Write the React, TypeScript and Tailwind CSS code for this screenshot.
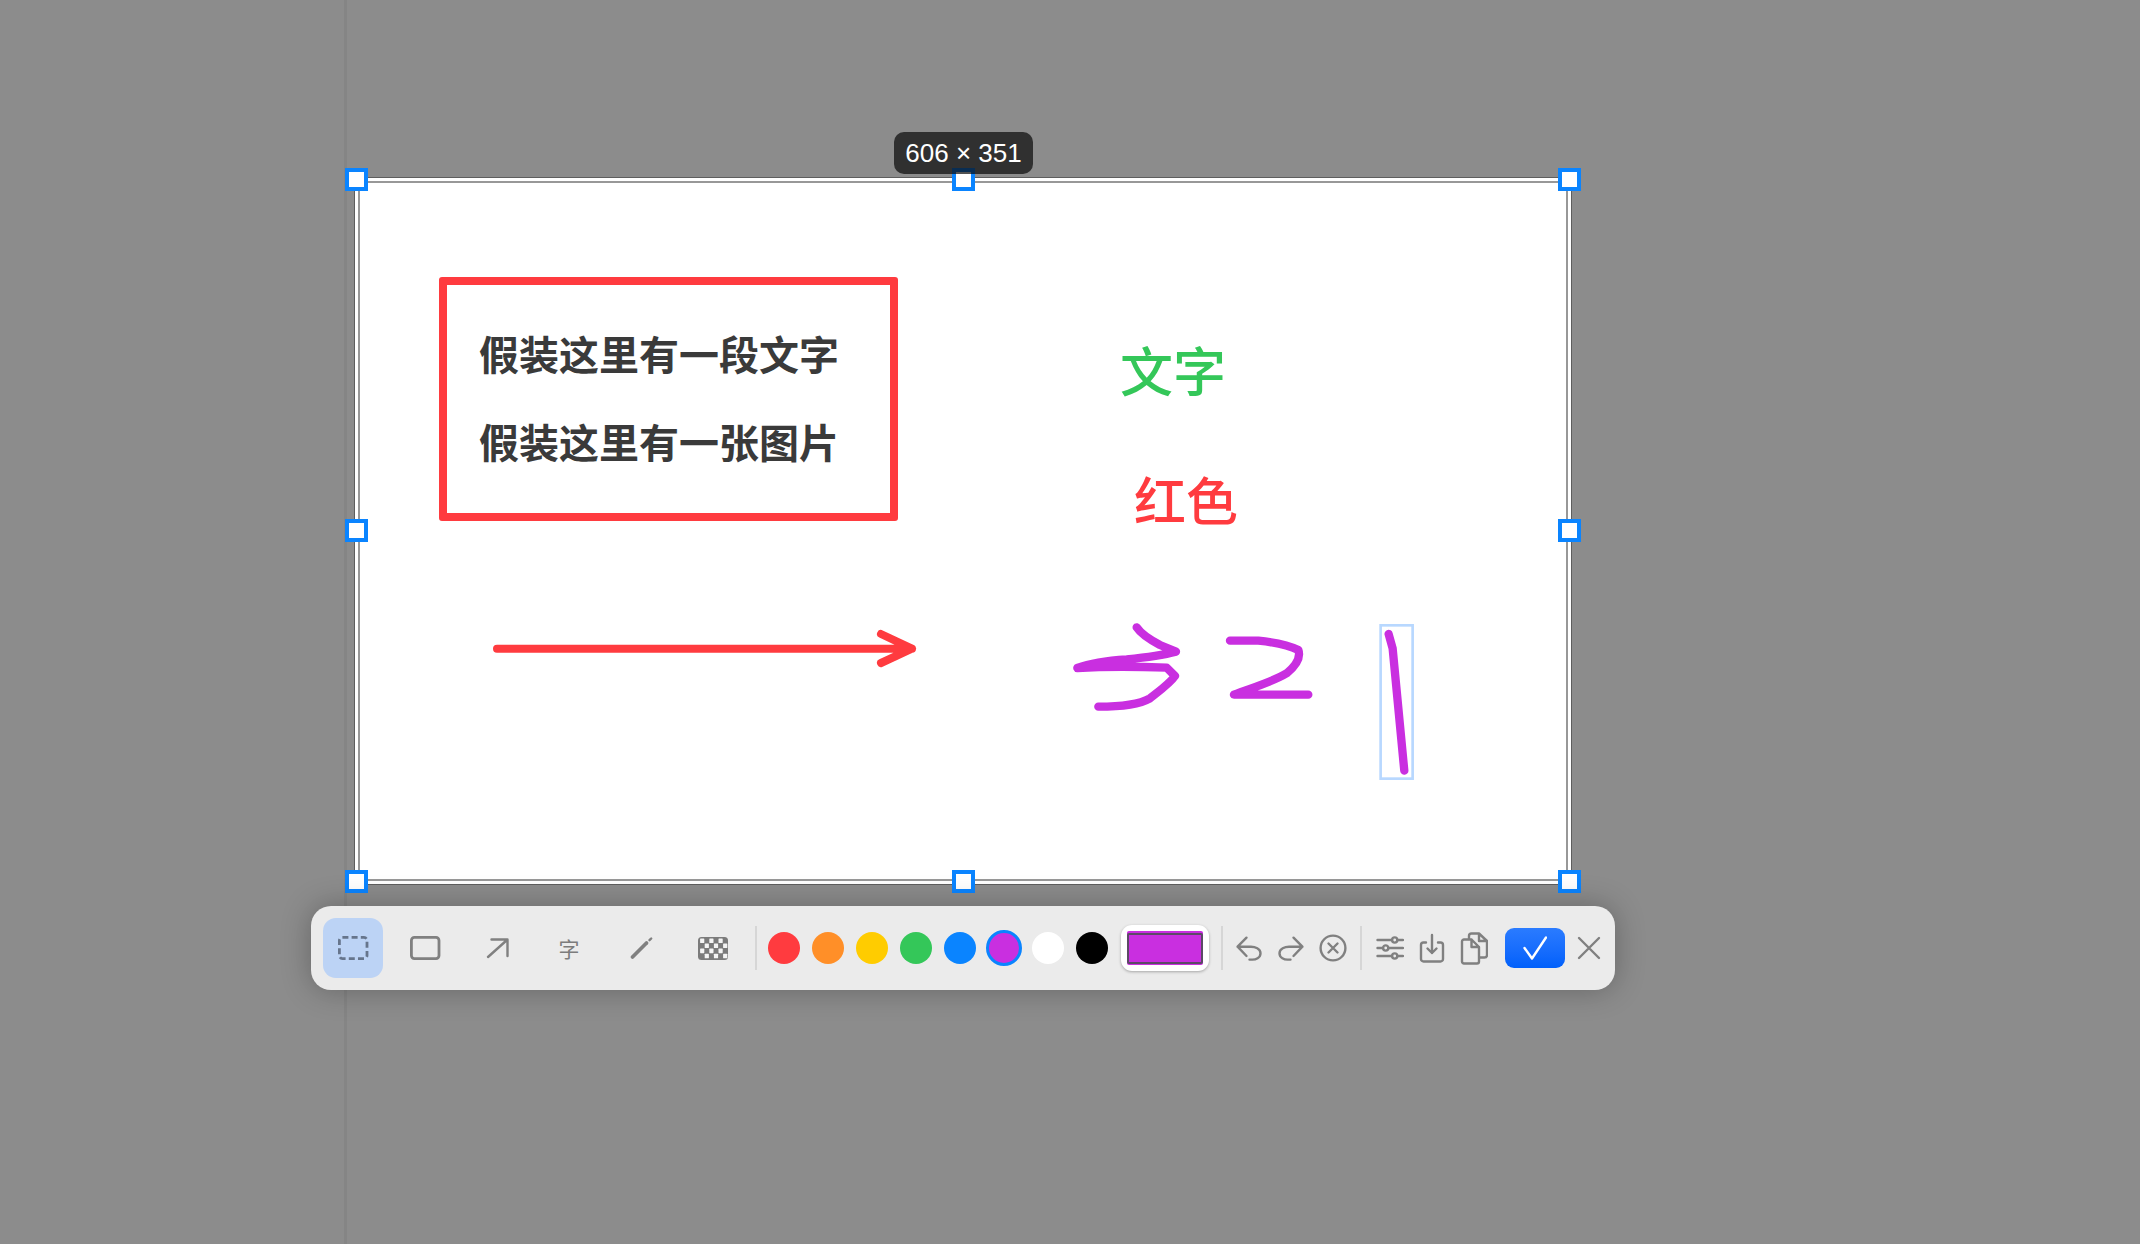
import React from 'react';

const swatches = ['#ff3b3f', '#ff8f28', '#ffcc00', '#34c759', '#0a84ff'];

// corner and edge grips of the selection frame
const handles = [
  'left-[-10px] top-[-10px]',
  'left-[597px] top-[-10px]',
  'left-[1203px] top-[-10px]',
  'left-[-10px] top-[341px]',
  'left-[1203px] top-[341px]',
  'left-[-10px] top-[692px]',
  'left-[597px] top-[692px]',
  'left-[1203px] top-[692px]',
];

const toolBtn = 'flex h-[60px] w-[60px] shrink-0 items-center justify-center rounded-[13px]';
const iconBox = 'flex h-[28px] w-[28px] shrink-0 items-center justify-center';
const divider = 'h-[44px] w-[2px] shrink-0 bg-[#d6d6d6]';

function Svg({ children, w = 28, h = 28 }: { children: React.ReactNode; w?: number; h?: number }) {
  return (
    <svg
      width={w}
      height={h}
      viewBox={`0 0 ${w} ${h}`}
      fill="none"
      stroke="#808080"
      strokeWidth="2.4"
      strokeLinecap="round"
      strokeLinejoin="round"
    >
      {children}
    </svg>
  );
}

function Mosaic() {
  const cells = [];
  for (let r = 0; r < 4; r++) {
    for (let c = 0; c < 6; c++) {
      if ((r + c) % 2 === 0) {
        cells.push(<rect key={`${r}-${c}`} x={1.5 + c * 4.6 + 0.6} y={1.4 + r * 5.1} width="4.2" height="4.6" rx="0.6" fill="#f4f4f4" />);
      }
    }
  }
  return (
    <svg width="30" height="23" viewBox="0 0 30 23">
      <rect width="30" height="23" rx="3.5" fill="#7b7b7b" />
      {cells}
    </svg>
  );
}

function Toolbar() {
  return (
    <div className="relative ml-[311px] mt-[21px] flex h-[84px] w-[1304px] items-center rounded-[20px] bg-[#ebebeb] pl-[12px] shadow-[0_0_30px_rgba(0,0,0,0.28)]">
      <div className="flex items-center gap-[12px]">
        <button className={`${toolBtn} bg-[#bcd3f5]`}>
          <svg width="31" height="24" viewBox="0 0 31 24" fill="none">
            <rect x="1.400" y="1.400" width="27.600" height="21.200" rx="3" stroke="#66758c" strokeWidth="2.800" strokeDasharray="6 3.200" />
          </svg>
        </button>
        <button className={toolBtn}>
          <svg width="31" height="24" viewBox="0 0 31 24" fill="none">
            <rect x="1.400" y="1.400" width="27.600" height="21.200" rx="3" stroke="#808080" strokeWidth="2.800" />
          </svg>
        </button>
        <button className={toolBtn}>
          <Svg>
            <path d="M5 23 24 6M8.500 5.500h16V22" />
          </Svg>
        </button>
        <button className={`${toolBtn} font-['Noto_Sans_CJK_SC',sans-serif] text-[21px] leading-none text-[#7c7c7c]`}>字</button>
        <button className={toolBtn}>
          <Svg>
            <path d="M5.500 23 19.500 9" strokeWidth="3.800" />
            <path d="M22.500 6.200 24.200 4.500" strokeWidth="2.400" />
          </Svg>
        </button>
        <button className={toolBtn}>
          <Mosaic />
        </button>
        <div className={divider} />
      </div>

      <div className="ml-[11px] flex items-center gap-[12px]">
        {swatches.map((c) => (
          <div key={c} className="h-[32px] w-[32px] shrink-0 rounded-full" style={{ backgroundColor: c }} />
        ))}
        <div className="mx-[-2px] h-[36px] w-[36px] shrink-0 rounded-full border-[3px] border-[#0a84ff] bg-[#c92fe0]" />
        <div className="h-[32px] w-[32px] shrink-0 rounded-full bg-white" />
        <div className="h-[32px] w-[32px] shrink-0 rounded-full bg-black" />
      </div>

      <div className="ml-[13px] flex h-[46px] w-[88px] shrink-0 items-center justify-center rounded-[11px] bg-white shadow-[0_1px_3px_rgba(0,0,0,0.3)]">
        <div className="h-[34px] w-[76px] rounded-[2px] bg-[#c92fe0] py-[1.5px]">
          <div className="h-full w-full rounded-[2px] border-2 border-[#5c4a66] bg-[#c92fe0]" />
        </div>
      </div>

      <div className={`${divider} ml-[12px]`} />

      <div className="ml-[12px] flex items-center gap-[14px]">
        <div className={iconBox}>
          <Svg>
            <path d="M2.600 12.700 16 12.700C20 12.700 25.500 14.500 25.500 19.200 25.500 24 20.500 25.600 17.500 25.600H14.500M2.600 12.700 11.500 3.700M2.600 12.700 11.500 22" />
          </Svg>
        </div>
        <div className={iconBox}>
          <Svg>
            <path d="M25.400 12.700 12 12.700C8 12.700 2.500 14.500 2.500 19.200 2.500 24 7.500 25.600 10.500 25.600H13.500M25.400 12.700 16.500 3.700M25.400 12.700 16.500 22" />
          </Svg>
        </div>
        <div className={iconBox}>
          <Svg>
            <circle cx="14" cy="14" r="12.400" />
            <path d="m9.500 9.500 9 9M18.500 9.500l-9 9" />
          </Svg>
        </div>
      </div>

      <div className={`${divider} ml-[13px]`} />

      <div className="ml-[14px] flex items-center gap-[14px]">
        <div className={iconBox}>
          <Svg>
            <path d="M1.500 6H16M21.500 6H27M1.500 14H7M12.500 14H27M1.500 22H16M21.500 22H27" />
            <circle cx="18.700" cy="6" r="2.600" />
            <circle cx="9.700" cy="14" r="2.600" />
            <circle cx="18.700" cy="22" r="2.600" />
          </Svg>
        </div>
        <div className={iconBox}>
          <Svg h={30}>
            <path d="M8 9.500H5.500A2.500 2.500 0 0 0 3 12V26A2.500 2.500 0 0 0 5.500 28.500H22.500A2.500 2.500 0 0 0 25 26V12A2.500 2.500 0 0 0 22.500 9.500H20" />
            <path d="M14 2V20M9.500 15.500 14 20 18.500 15.500" />
          </Svg>
        </div>
        <div className={iconBox}>
          <Svg h={33}>
            <path d="M9 7V4A2.500 2.500 0 0 1 11.500 1.500H19L27 9V23A2.500 2.500 0 0 1 24.500 25.500H20M19 1.500V9H27" />
            <path d="M4 7.500H11.500L19 15V29.500A2 2 0 0 1 17 31.500H4A2 2 0 0 1 2 29.500V9.500A2 2 0 0 1 4 7.500ZM11.500 7.500V15H19" />
          </Svg>
        </div>
      </div>

      <button className="ml-[17px] flex h-[40px] w-[60px] shrink-0 items-center justify-center rounded-[9px] bg-gradient-to-b from-[#2a7bff] to-[#0060fb]">
        <svg width="24" height="24" viewBox="0 0 24 24" fill="none" stroke="#ffffff" strokeWidth="2.400" strokeLinecap="round" strokeLinejoin="round">
          <path d="M1.500 12 9 22.500 23 1.500" />
        </svg>
      </button>
      <div className={`${iconBox} ml-[10px]`}>
        <Svg>
          <path d="M4 4 24 24M24 4 4 24" />
        </Svg>
      </div>
    </div>
  );
}

function Canvas() {
  return (
    <div className="relative h-full w-full overflow-hidden bg-white pl-[79px] pt-[94px]">
      <div className="flex h-[244px] w-[459px] flex-col justify-center rounded-[3px] border-[8px] border-[#ff3b3f] pb-[5px] pl-[32px] font-['Noto_Sans_CJK_SC',sans-serif] text-[40px] font-bold leading-[88px] text-[#3a3a3a]">
        <div>假装这里有一段文字</div>
        <div>假装这里有一张图片</div>
      </div>

      {/* text annotations */}
      <div className="absolute left-[760px] top-[156px] font-['Noto_Sans_CJK_SC',sans-serif] text-[53px] font-medium leading-[60px] text-[#34c759]">文字</div>
      <div className="absolute left-[774px] top-[286px] font-['Noto_Sans_CJK_SC',sans-serif] text-[52px] font-medium leading-[60px] text-[#ff3b3f]">红色</div>

      {/* drawn annotations */}
      <svg className="absolute left-0 top-0" width="1206" height="696" viewBox="360 183 1206 696" fill="none" strokeLinecap="round" strokeLinejoin="round">
        <path d="M497 648.700H912M881 634 912 648.700 881 663" stroke="#ff3b3f" strokeWidth="8" />
        <g transform="translate(1040 600) scale(0.3333)" stroke="#c92fe0" strokeWidth="25">
          <path d="M290 82C305 105 335 122 360 135L408 155C370 165 320 172 260 178C200 182 150 190 112 204C180 200 300 200 380 203L405 228C390 250 355 275 330 295C300 312 240 320 175 320" />
          <path d="M570 122H655C695 126 745 135 775 150C782 170 770 195 740 220C700 245 640 262 582 284H805" />
          <path d="M1046 102 1058 145 1093 512" />
          <rect x="1022" y="76" width="96" height="460" stroke="#b8d8ff" strokeWidth="8" strokeLinejoin="miter" />
        </g>
      </svg>
    </div>
  );
}

export default function App() {
  return (
    <div className="relative h-[1244px] w-[2140px] overflow-hidden bg-[#8c8c8c]">
      {/* faint window edge behind the capture */}
      <div className="absolute left-[344px] top-0 h-full w-[3px] bg-[#858585]" />

      <div className="relative ml-[354px] mt-[177px] h-[708px] w-[1218px] border border-[#5e5e5e]">
        <div className="h-full w-full border-[3px] border-white">
          <div className="h-full w-full border-2 border-[#989898]">
            <Canvas />
          </div>
        </div>
        {handles.map((pos) => (
          <div key={pos} className={`absolute ${pos} h-[23px] w-[23px] border-[4px] border-[#0a84ff] bg-white`} />
        ))}
        <div className="absolute left-[539px] top-[-46px] flex h-[42px] w-[139px] items-center justify-center rounded-[10px] bg-[#080808]/70 font-['Liberation_Sans',sans-serif] text-[26px] text-white">
          606 × 351
        </div>
      </div>

      <Toolbar />
    </div>
  );
}
